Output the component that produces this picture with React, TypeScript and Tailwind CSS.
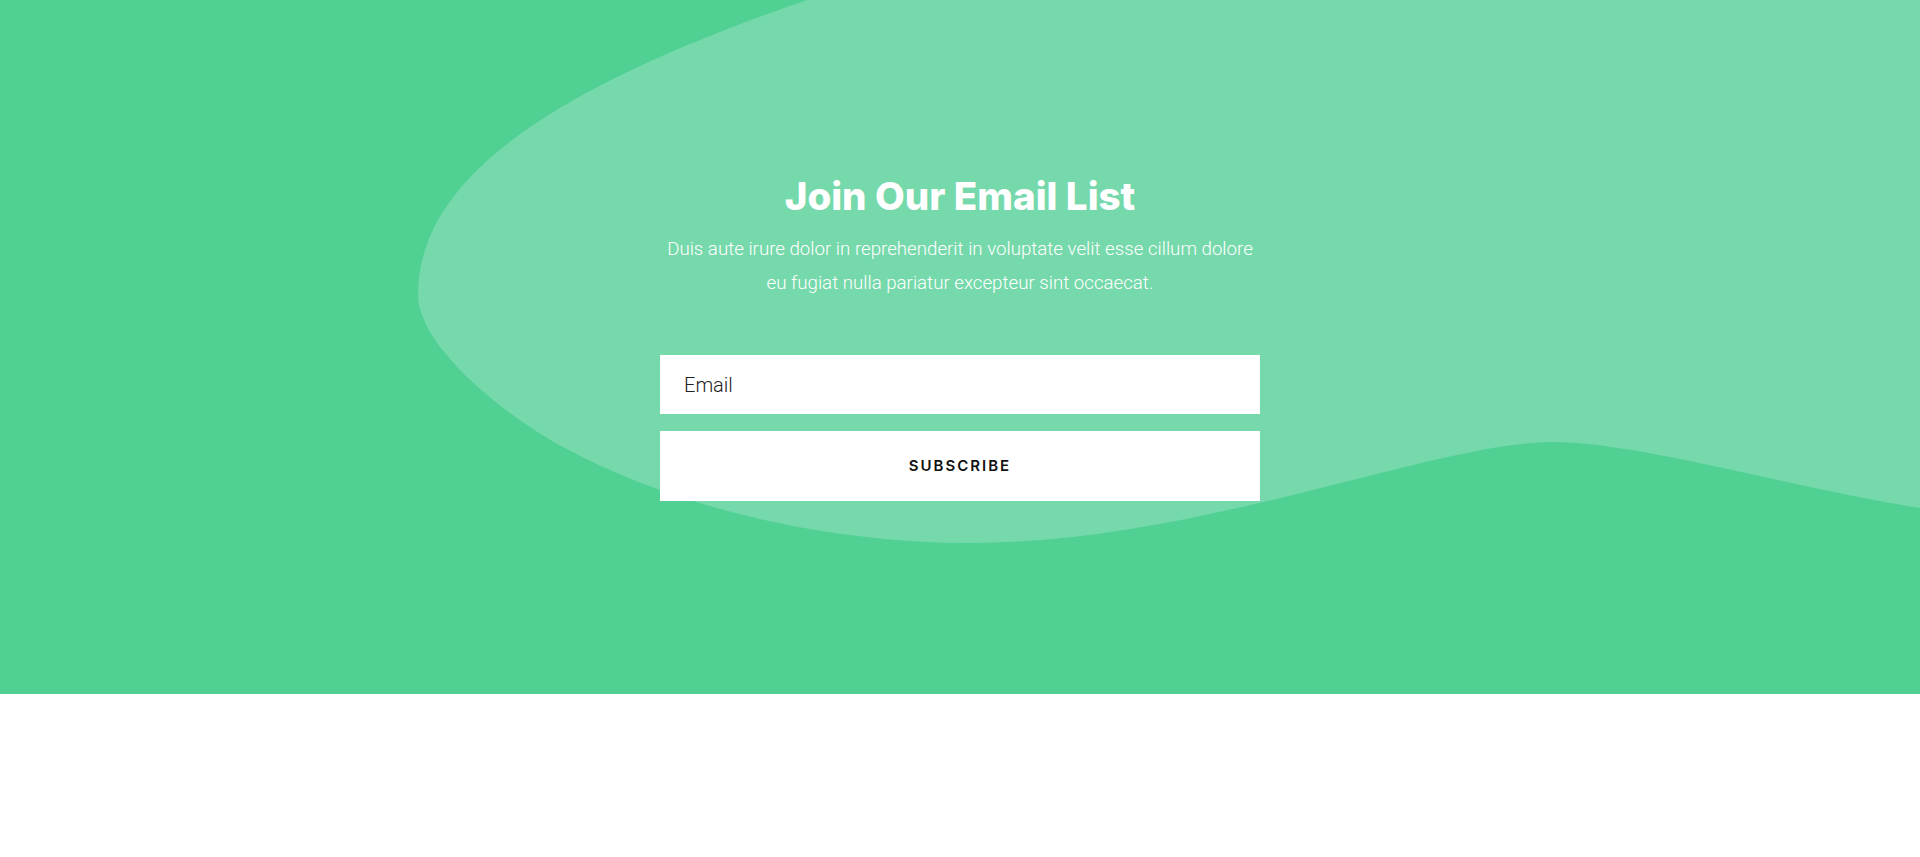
import React from 'react';

// light blob + wave behind the form
const Blob = () => (
    <svg
        className="absolute inset-0 w-full h-full"
        viewBox="0 0 1920 694"
        preserveAspectRatio="none"
        aria-hidden="true"
    >
        <path
            fill="#76D9AB"
            d="M807 0 C560 85 418 175 418 295 C418 345 501.5 413.5 563 447 C677 509 830 543 970 543 C1200 543 1433 442 1553 442 C1640 442 1800 490 1920 508 L1920 0 Z"
        />
    </svg>
);

export default function App() {
    return (
        <div className="w-full min-h-[857px] bg-white">
            {/*newsletter*/}
            <section className="relative h-[694px] bg-[#51D093] overflow-hidden">
                <Blob/>
                <div className="relative flex flex-col items-center pt-[173px]">
                    <h2 className="text-[38.5px] leading-[46px] font-extrabold text-white font-['Inter',sans-serif]">
                        Join Our Email List
                    </h2>
                    <p className="mt-[13px] text-center text-[18.7px] leading-[34px] font-light text-white font-['Roboto',sans-serif]">
                        Duis aute irure dolor in reprehenderit in voluptate velit esse cillum dolore<br/>
                        eu fugiat nulla pariatur excepteur sint occaecat.
                    </p>

                    <form className="mt-[55px] flex flex-col gap-[17px] w-[600px]" onSubmit={(e) => e.preventDefault()}>
                        <input
                            type="email"
                            placeholder="Email"
                            className="h-[59px] w-full bg-white px-[24px] text-[20px] font-light text-[#222] placeholder:text-[#222] outline-none font-['Roboto',sans-serif]"
                        />
                        <button
                            type="submit"
                            className="h-[70px] w-full bg-white text-[15px] font-semibold tracking-[2px] text-[#111] font-['Inter',sans-serif]"
                        >
                            SUBSCRIBE
                        </button>
                    </form>
                </div>
            </section>
        </div>
    );
}
